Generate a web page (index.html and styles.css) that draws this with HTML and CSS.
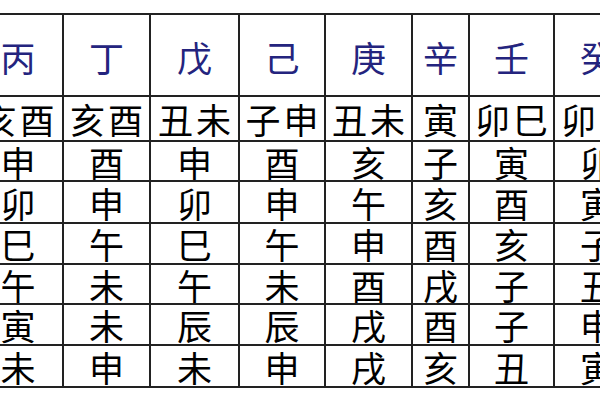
FILE: index.html
```html
<!DOCTYPE html>
<html lang="zh">
<head>
<meta charset="utf-8">
<link rel="stylesheet" href="styles.css">
</head>
<body>
<table class="grid">
  <colgroup>
    <col class="w0"><col class="w1"><col class="w2"><col class="w3"><col class="w4"><col class="w5"><col class="w6"><col class="w7">
  </colgroup>
  <thead>
    <tr class="head">
      <th>丙</th><th>丁</th><th>戊</th><th>己</th><th>庚</th><th>辛</th><th>壬</th><th>癸</th>
    </tr>
  </thead>
  <tbody>
    <tr class="r1"><td>亥酉</td><td>亥酉</td><td>丑未</td><td>子申</td><td>丑未</td><td>寅</td><td>卯巳</td><td>卯巳</td></tr>
    <tr class="r2"><td>申</td><td>酉</td><td>申</td><td>酉</td><td>亥</td><td>子</td><td>寅</td><td>卯</td></tr>
    <tr class="r3"><td>卯</td><td>申</td><td>卯</td><td>申</td><td>午</td><td>亥</td><td>酉</td><td>寅</td></tr>
    <tr class="r4"><td>巳</td><td>午</td><td>巳</td><td>午</td><td>申</td><td>酉</td><td>亥</td><td>子</td></tr>
    <tr class="r5"><td>午</td><td>未</td><td>午</td><td>未</td><td>酉</td><td>戌</td><td>子</td><td>丑</td></tr>
    <tr class="r6"><td>寅</td><td>未</td><td>辰</td><td>辰</td><td>戌</td><td>酉</td><td>子</td><td>申</td></tr>
    <tr class="r7"><td>未</td><td>申</td><td>未</td><td>申</td><td>戌</td><td>亥</td><td>丑</td><td>寅</td></tr>
  </tbody>
</table>
</body>
</html>
```

FILE: styles.css
```css
html, body {
  margin: 0;
  padding: 0;
  background: #ffffff;
  overflow: hidden;
}
body {
  width: 600px;
  height: 400px;
}
.grid {
  border-collapse: collapse;
  table-layout: fixed;
  width: 668px;
  margin-left: -28px;
  margin-top: 13px;
  font-family: "Noto Sans CJK SC", "Noto Sans CJK TC", sans-serif;
  font-size: 35px;
  line-height: 1;
  color: #000;
}
.w0 { width: 90px; }
.w1 { width: 87px; }
.w2 { width: 89px; }
.w3 { width: 86px; }
.w4 { width: 87px; }
.w5 { width: 57px; }
.w6 { width: 85px; }
.w7 { width: 87px; }
.grid th, .grid td {
  border: 2px solid #222;
  padding: 0;
  text-align: center;
  vertical-align: middle;
  font-weight: 400;
  white-space: nowrap;
  overflow: hidden;
}
.grid th {
  color: #24247e;
  padding-top: 2px;
}
.grid td {
  letter-spacing: 3px;
  text-indent: 3px;
}
.head { height: 82px; }
.r1 { height: 45px; }
.r2 { height: 40px; }
.r3 { height: 42px; }
.r4 { height: 41px; }
.r5 { height: 40px; }
.r6 { height: 41px; }
.r7 { height: 42px; }
```
